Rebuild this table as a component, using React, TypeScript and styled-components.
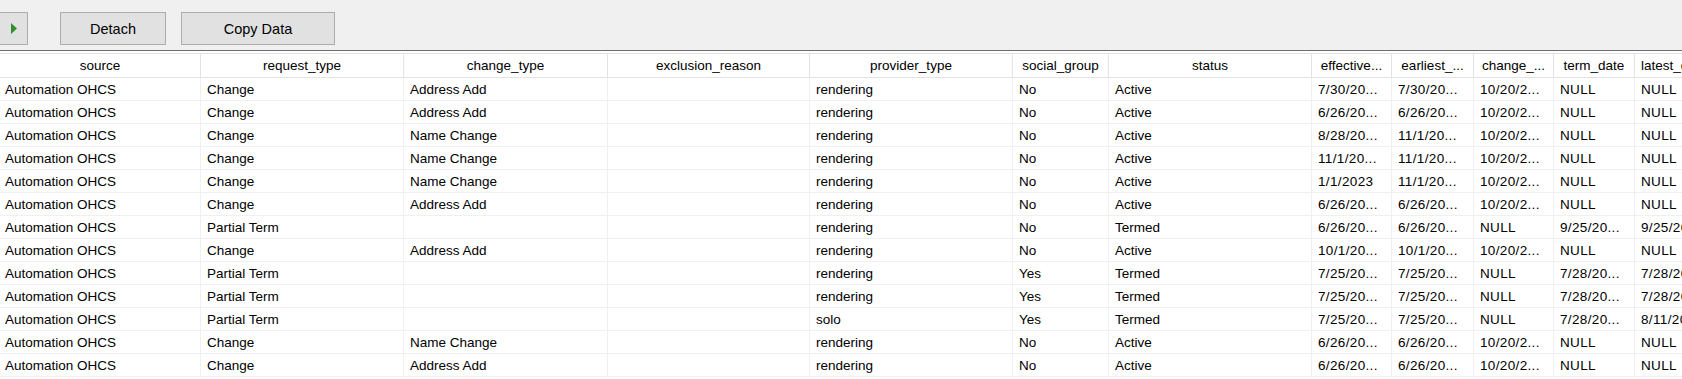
import React from 'react';
import styled, { createGlobalStyle } from 'styled-components';

const GlobalStyle = createGlobalStyle`
  html, body {
    margin: 0;
    padding: 0;
    background: #ffffff;
    overflow: hidden;
  }
  body {
    font-family: 'Liberation Sans', Arial, sans-serif;
    color: #000000;
  }
`;

const COLUMNS = [201, 203, 204, 202, 203, 96, 203, 80, 82, 80, 81, 140];

const gridTemplate = COLUMNS.map((w) => `${w}px`).join(' ');

const Page = styled.div`
  display: flex;
  flex-direction: column;
  width: 1682px;
  overflow: hidden;
`;

const Toolbar = styled.div`
  display: flex;
  align-items: flex-start;
  height: 51px;
  padding-top: 12px;
  box-sizing: border-box;
  background: #f0f0f0;
  border-bottom: 1px solid #6e6e6e;
`;

const ToolButton = styled.button<{ w: number; gap: number }>`
  display: flex;
  align-items: center;
  justify-content: center;
  width: ${({ w }) => w}px;
  height: 33px;
  margin-left: ${({ gap }) => gap}px;
  padding: 0;
  background: #e1e1e1;
  border: 1px solid #adadad;
  font-family: 'Liberation Sans', Arial, sans-serif;
  font-size: 14.5px;
  color: #000000;
  box-sizing: border-box;
`;

const PlayWrap = styled.span`
  display: flex;
  margin-left: 6px;
`;

const Spacer = styled.div`
  height: 2px;
  background: #ffffff;
`;

const Row = styled.div<{ header?: boolean }>`
  display: grid;
  grid-template-columns: ${gridTemplate};
  height: ${({ header }) => (header ? 24 : 23)}px;
  border-top: ${({ header }) => (header ? '1px solid #e3e3e3' : 'none')};
`;

const Cell = styled.div<{ header?: boolean; left?: boolean; dense?: boolean }>`
  display: flex;
  align-items: center;
  justify-content: ${({ header, left }) => (header && !left ? 'center' : 'flex-start')};
  padding: ${({ header, left }) => (header && !left ? '0 2px' : '0 0 0 6px')};
  box-sizing: border-box;
  border-right: 1px solid ${({ header }) => (header ? '#e3e3e3' : '#f0f0f0')};
  border-bottom: 1px solid ${({ header }) => (header ? '#e3e3e3' : '#f0f0f0')};
  font-size: 13.5px;
  letter-spacing: ${({ dense }) => (dense ? '0.35px' : '0')};
  white-space: nowrap;
  overflow: hidden;
`;

const FirstCell = styled(Cell)`
  padding-left: ${({ header }) => (header ? '2px' : '5px')};
`;

const headers = [
  'source',
  'request_type',
  'change_type',
  'exclusion_reason',
  'provider_type',
  'social_group',
  'status',
  'effective...',
  'earliest_...',
  'change_...',
  'term_date',
  'latest_date',
];

const rows: string[][] = [
  ['Change', 'Address Add', 'rendering', 'No', 'Active', '7/30/20...', '7/30/20...', '10/20/2...', 'NULL', 'NULL'],
  ['Change', 'Address Add', 'rendering', 'No', 'Active', '6/26/20...', '6/26/20...', '10/20/2...', 'NULL', 'NULL'],
  ['Change', 'Name Change', 'rendering', 'No', 'Active', '8/28/20...', '11/1/20...', '10/20/2...', 'NULL', 'NULL'],
  ['Change', 'Name Change', 'rendering', 'No', 'Active', '11/1/20...', '11/1/20...', '10/20/2...', 'NULL', 'NULL'],
  ['Change', 'Name Change', 'rendering', 'No', 'Active', '1/1/2023', '11/1/20...', '10/20/2...', 'NULL', 'NULL'],
  ['Change', 'Address Add', 'rendering', 'No', 'Active', '6/26/20...', '6/26/20...', '10/20/2...', 'NULL', 'NULL'],
  ['Partial Term', '', 'rendering', 'No', 'Termed', '6/26/20...', '6/26/20...', 'NULL', '9/25/20...', '9/25/2023'],
  ['Change', 'Address Add', 'rendering', 'No', 'Active', '10/1/20...', '10/1/20...', '10/20/2...', 'NULL', 'NULL'],
  ['Partial Term', '', 'rendering', 'Yes', 'Termed', '7/25/20...', '7/25/20...', 'NULL', '7/28/20...', '7/28/2023'],
  ['Partial Term', '', 'rendering', 'Yes', 'Termed', '7/25/20...', '7/25/20...', 'NULL', '7/28/20...', '7/28/2023'],
  ['Partial Term', '', 'solo', 'Yes', 'Termed', '7/25/20...', '7/25/20...', 'NULL', '7/28/20...', '8/11/2023'],
  ['Change', 'Name Change', 'rendering', 'No', 'Active', '6/26/20...', '6/26/20...', '10/20/2...', 'NULL', 'NULL'],
  ['Change', 'Address Add', 'rendering', 'No', 'Active', '6/26/20...', '6/26/20...', '10/20/2...', 'NULL', 'NULL'],
];

const PlayIcon = () => (
  <svg width="6" height="11" viewBox="0 0 6 11">
    <polygon points="0,0 6,5.5 0,11" fill="#2f8f2f" />
  </svg>
);

const App = (): JSX.Element => {
  return (
    <Page>
      <GlobalStyle />
      <Toolbar>
        <ToolButton w={34} gap={-6}>
          <PlayWrap>
            <PlayIcon />
          </PlayWrap>
        </ToolButton>
        <ToolButton w={106} gap={32}>Detach</ToolButton>
        <ToolButton w={154} gap={15}>Copy Data</ToolButton>
      </Toolbar>
      <Spacer />
      <Row header>
        {headers.map((h, i) =>
          i === 0 ? (
            <FirstCell header key={h}>{h}</FirstCell>
          ) : (
            <Cell header left={i === headers.length - 1} key={h}>{h}</Cell>
          )
        )}
      </Row>
      {rows.map((r, idx) => (
        <Row key={`row${idx}`}>
          <FirstCell>Automation OHCS</FirstCell>
          <Cell>{r[0]}</Cell>
          <Cell>{r[1]}</Cell>
          <Cell></Cell>
          {r.slice(2).map((v, j) => (
            <Cell dense={j >= 3} key={`c${idx}-${j}`}>{v}</Cell>
          ))}
        </Row>
      ))}
    </Page>
  );
};

export default App;
